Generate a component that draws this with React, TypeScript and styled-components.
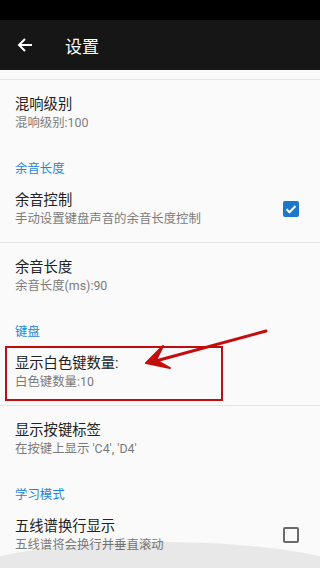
import styled, { createGlobalStyle } from "styled-components";

const GlobalStyle = createGlobalStyle`
  html, body {
    margin: 0;
    padding: 0;
    background: #fafafa;
  }
  body {
    font-family: "Roboto", "Noto Sans CJK SC", sans-serif;
  }
`;

interface prefItem {
  kind: "item" | "category";
  title: string;
  summary?: string;
  check?: "on" | "off";
  divider?: boolean;
  marked?: boolean;
}

const Data: prefItem[] = [
  { kind: "item", title: "混响级别", summary: "混响级别:100" },
  { kind: "category", title: "余音长度" },
  { kind: "item", title: "余音控制", summary: "手动设置键盘声音的余音长度控制", check: "on", divider: true },
  { kind: "item", title: "余音长度", summary: "余音长度(ms):90" },
  { kind: "category", title: "键盘" },
  { kind: "item", title: "显示白色键数量:", summary: "白色键数量:10", divider: true, marked: true },
  { kind: "item", title: "显示按键标签", summary: "在按键上显示 'C4', 'D4'" },
  { kind: "category", title: "学习模式" },
  { kind: "item", title: "五线谱换行显示", summary: "五线谱将会换行并垂直滚动", check: "off" },
];

const App = () => {
  return (
    <Screen>
      <GlobalStyle />
      <StatusBar />
      <Toolbar>
        <BackBtn>
          <svg width="16" height="16" viewBox="0 0 16 16">
            <path
              d="M15 8H2M8 2L2 8l6 6"
              fill="none"
              stroke="#fff"
              strokeWidth="2"
            />
          </svg>
        </BackBtn>
        <ToolbarTitle>设置</ToolbarTitle>
      </Toolbar>
      <List>
        <TopStrip />
        {Data.map((row: prefItem, i: number) => {
          if (row.kind === "category") {
            return <Category key={i}>{row.title}</Category>;
          }
          return (
            <Row key={i} $divider={row.divider}>
              <RowText>
                <RowTitle>{row.title}</RowTitle>
                <RowSummary>{row.summary}</RowSummary>
              </RowText>
              {row.check && (
                <CheckBox $on={row.check === "on"}>
                  {row.check === "on" && (
                    <svg width="12" height="10" viewBox="0 0 12 10">
                      <path
                        d="M1.5 5.2l3 3L10.5 2"
                        fill="none"
                        stroke="#fff"
                        strokeWidth="2"
                      />
                    </svg>
                  )}
                </CheckBox>
              )}
              {row.marked && <MarkBox />}
            </Row>
          );
        })}
      </List>
      <Arrow width="320" height="568" viewBox="0 0 320 568">
        <path d="M266 331L152 362" stroke="#c40d0d" strokeWidth="3" strokeLinecap="round" fill="none" />
        <path d="M163 346L146 363L170 368L156 360Z" fill="#c40d0d" stroke="#c40d0d" strokeWidth="2" strokeLinejoin="round" />
      </Arrow>
      <Glow />
    </Screen>
  );
};

const Screen = styled.div`
  position: relative;
  width: 320px;
  height: 568px;
  overflow: hidden;
  background: #fafafa;
`;

const StatusBar = styled.div`
  height: 20px;
  background: #000;
`;

const Toolbar = styled.div`
  height: 50px;
  background: #161616;
  display: flex;
  align-items: center;
`;

const BackBtn = styled.div`
  width: 48px;
  height: 50px;
  display: flex;
  align-items: center;
  padding-left: 17px;
  box-sizing: border-box;
`;

const ToolbarTitle = styled.div`
  margin-left: 17px;
  color: #fff;
  font-size: 17px;
`;

const List = styled.div`
  display: flex;
  flex-direction: column;
`;

const TopStrip = styled.div`
  height: 9px;
  border-bottom: 1px solid #e3e3e3;
`;

const Row = styled.div<{ $divider?: boolean }>`
  position: relative;
  display: flex;
  align-items: center;
  padding: 0 20px 0 15px;
  box-sizing: border-box;
  border-bottom: ${(p) => (p.$divider ? "1px solid #e3e3e3" : "none")};
  height: ${(p) => (p.$divider ? "67px" : "66px")};
`;

const RowText = styled.div`
  flex: 1;
  display: flex;
  flex-direction: column;
  padding-bottom: 2px;
`;

const RowTitle = styled.div`
  font-size: 14.3px;
  line-height: 20px;
  color: #212121;
`;

const RowSummary = styled.div`
  font-size: 12.4px;
  line-height: 17px;
  color: #7a7a7a;
`;

const Category = styled.div`
  padding: 16px 15px 0;
  height: 30px;
  box-sizing: border-box;
  font-size: 12.4px;
  line-height: 14px;
  color: #1e88d8;
`;

const CheckBox = styled.div<{ $on: boolean }>`
  width: 16px;
  height: 16px;
  box-sizing: border-box;
  border-radius: 2px;
  display: flex;
  align-items: center;
  justify-content: center;
  background: ${(p) => (p.$on ? "#1b78c9" : "transparent")};
  border: ${(p) => (p.$on ? "none" : "2px solid #6a6a6a")};
  margin-right: 1px;
`;

const MarkBox = styled.div`
  position: absolute;
  left: 5px;
  top: 7px;
  width: 218px;
  height: 55px;
  box-sizing: border-box;
  border: 2px solid #c00d0d;
`;

const Arrow = styled.svg`
  position: absolute;
  left: 0;
  top: 0;
  pointer-events: none;
`;

const Glow = styled.div`
  position: absolute;
  left: -60px;
  right: -60px;
  top: 542px;
  height: 90px;
  border-radius: 50%;
  background: rgba(0, 0, 0, 0.07);
  pointer-events: none;
`;

export default App;
